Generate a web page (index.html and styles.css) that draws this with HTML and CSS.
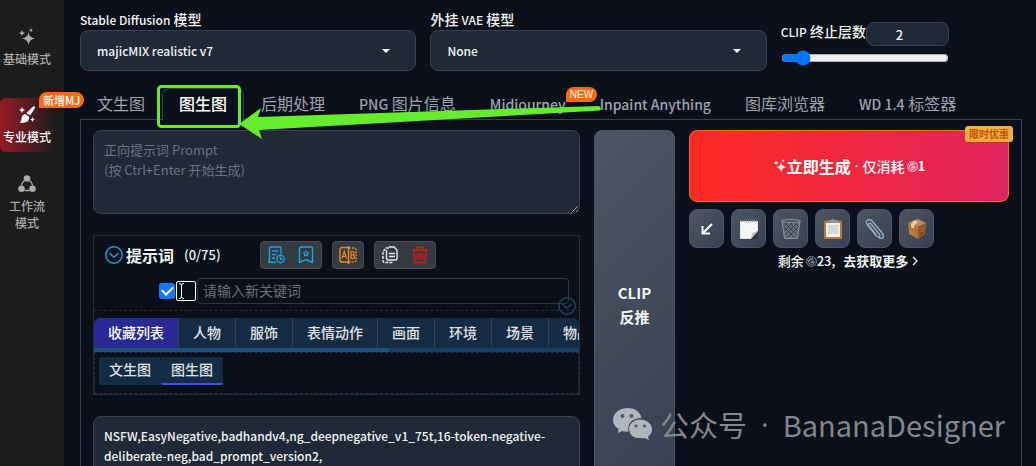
FILE: index.html
```html
<!DOCTYPE html>
<html lang="zh-CN">
<head>
<meta charset="utf-8">
<meta name="viewport" content="width=device-width, initial-scale=1">
<title>Stable Diffusion</title>
<link rel="stylesheet" href="styles.css">
</head>
<body>
<svg class="defs" width="0" height="0" aria-hidden="true">
  <symbol id="sparkle" viewBox="0 0 18 18"><path fill="currentColor" d="M10.500 4 Q11.200 9.800 17 10.500 Q11.200 11.200 10.500 17 Q9.800 11.200 4 10.500 Q9.800 9.800 10.500 4ZM4 2 Q4.400 4.600 7 5 Q4.400 5.400 4 8 Q3.600 5.400 1 5 Q3.600 4.600 4 2ZM13 0 Q13.300 1.900 15 2.200 Q13.300 2.500 13 4.400 Q12.700 2.500 11 2.200 Q12.700 1.900 13 0Z"/></symbol>
  <symbol id="coin" viewBox="0 0 12 12"><g fill="none" stroke="currentColor"><circle cx="6" cy="6" r="5.300"/><path d="M8.300 3.800 A3.200 3.200 0 1 0 9 7 M9.300 5.800 H6 Q4.500 6 5.600 7.400 L8.500 7.300 M3 5.200 L7 3.300"/></g></symbol>
  <symbol id="down" viewBox="0 0 18 18"><g fill="none" stroke="currentColor" stroke-width="1.500"><circle cx="9" cy="9" r="8.200"/><path d="M4.500 7 L9 11.300 L13.500 7"/></g></symbol>
</svg>
<div class="app">
  <nav class="sidebar">
    <a class="mode" href="#basic"><svg class="mode-icon" viewBox="0 0 18 18"><use href="#sparkle"/></svg><span>基础模式</span></a>
    <a class="mode active" href="#pro">
      <svg class="mode-icon" viewBox="0 0 18 18"><path fill="currentColor" d="M16.500 .5 Q17.500 1 16.800 2.500 L12 9.500 L8.500 7 L14.500 1 Q15.500 0 16.500 .5ZM7.500 8 L11 10.700 Q11.500 15 7 16.600 Q4 17.500 1.500 16.200 Q3.600 15.500 3.500 12.500 Q4 8.500 7.500 8ZM4 1 Q4.400 3.600 7 4 Q4.400 4.400 4 7 Q3.600 4.400 1 4 Q3.600 3.600 4 1ZM14.500 11 Q14.800 13.200 17 13.500 Q14.800 13.800 14.500 16 Q14.200 13.800 12 13.500 Q14.200 13.200 14.500 11Z"/></svg>
      <span>专业模式</span><span class="badge mj">新增MJ</span>
    </a>
    <a class="mode" href="#flow">
      <svg class="mode-icon" viewBox="0 0 18 18"><g fill="none" stroke="currentColor" stroke-width="1.500"><path d="M6.500 5.500 Q3.800 7.500 3.300 10.500 M11.500 5.500 Q14.200 7.500 14.700 10.500 M6.500 15.500 H11.500"/></g><g fill="currentColor"><circle cx="9" cy="3.500" r="3.300"/><circle cx="3.500" cy="13.800" r="3.300"/><circle cx="14.500" cy="13.800" r="3.300"/></g></svg>
      <span>工作流<br>模式</span>
    </a>
  </nav>
  <main class="main">
    <header class="settings">
      <div class="field">
        <label for="model"><span class="latin">Stable Diffusion</span> 模型</label>
        <div class="select-wrap"><select id="model"><option>majicMIX realistic v7</option></select></div>
      </div>
      <div class="field">
        <label for="vae">外挂 <span class="latin">VAE</span> 模型</label>
        <div class="select-wrap"><select id="vae"><option>None</option></select></div>
      </div>
      <div class="clip">
        <div class="clip-row"><label for="clip-number"><span class="latin">CLIP</span> 终止层数</label><input id="clip-number" class="clip-number" type="text" value="2"></div>
        <input class="slider" type="range" min="1" max="12" value="2" aria-label="CLIP 终止层数">
      </div>
    </header>
    <div class="tabs" role="tablist">
      <button role="tab">文生图</button>
      <button role="tab" class="current" aria-selected="true">图生图</button>
      <button role="tab">后期处理</button>
      <button role="tab"><span class="latin">PNG</span> 图片信息</button>
      <button role="tab"><span class="latin">Midjourney</span><span class="badge new">NEW</span></button>
      <button role="tab"><span class="latin">Inpaint Anything</span></button>
      <button role="tab">图库浏览器</button>
      <button role="tab"><span class="latin">WD 1.4</span> 标签器</button>
    </div>
    <section class="panel">
      <div class="prompts">
        <textarea class="prompt" aria-label="正向提示词" placeholder="正向提示词 Prompt&#10;(按 Ctrl+Enter 开始生成)"></textarea>
        <div class="keywords">
          <div class="kw-head">
            <svg class="chevron" viewBox="0 0 18 18"><use href="#down"/></svg>
            <h2>提示词</h2><span class="count">(0/75)</span>
            <div class="tools">
              <div class="tool-group blue">
                <button aria-label="历史"><svg viewBox="0 0 18 18"><g fill="none" stroke="currentColor" stroke-width="1.400"><path d="M14 8 V2.500 Q14 1 12.500 1 H4 Q2.500 1 2.500 2.500 V14 Q2.500 16 1 16.300 H9 M5 5 H11.500 M5 8.500 H9.500 M5 12 H8"/><circle cx="13.500" cy="13" r="3.700"/><path d="M13.500 10.800 V13.300 H15.500"/></g></svg></button>
                <button aria-label="收藏"><svg viewBox="0 0 18 18"><path fill="none" stroke="currentColor" stroke-width="1.400" d="M2.500 2.500 Q2.500 1 4 1 H14 Q15.500 1 15.500 2.500 V16.500 L9 13.500 L2.500 16.500Z"/><path fill="currentColor" d="M9 4 L10.200 6 L12.300 6.500 L11 8.200 L11.200 10.500 L9 9.700 L6.800 10.500 L7 8.200 L5.700 6.500 L7.800 6Z"/><path fill="#363a42" d="M8 6.500h2v2H8z"/></svg></button>
              </div>
              <div class="tool-group orange">
                <button aria-label="翻译"><svg viewBox="0 0 18 18"><g fill="none" stroke="currentColor" stroke-width="1.400"><path d="M9 1.500 H3 Q1 1.500 1 3.500 V14 Q1 16 3 16 H9 M9.500 0 V18"/><path stroke-dasharray="2 1" d="M10 2 H15 Q17 2 17 4 V14 Q17 16 15 16 H10"/><path stroke-width="1.200" d="M3 12.500 L5.200 5.500 L7.500 12.500 M3.700 10.500 H6.800 M12 5.500 V12.500 H13.500 Q15.500 12.500 15.500 10.500 Q15.500 9 14 9 H12 H13.500 Q15 9 15 7.200 Q15 5.500 13.500 5.500Z"/></g></svg></button>
              </div>
              <div class="tool-group">
                <button aria-label="复制"><svg viewBox="0 0 18 18"><g fill="none" stroke="#e5e7eb" stroke-width="1.400"><path d="M8 1 H13 L16 4 V12.500 Q16 14 14.500 14 H7 Q5.500 14 5.500 12.500 V4 M8 7.500 H14 M8 10.500 H14"/><path stroke-dasharray="3 1" d="M8 2 H5.500 L2 5.500 V15 Q2 16.500 3.500 16.500 H12"/></g></svg></button>
                <button aria-label="删除"><svg viewBox="0 0 18 18"><path fill="none" stroke="#c9200e" stroke-width="1.500" d="M1 4 H17 M6 4 V1.500 H12 V4 M3.500 4 V15 Q3.500 16.500 5 16.500 H13 Q14.500 16.500 14.500 15 V4 M6.500 7 V14 M9 7 V14 M11.500 7 V14"/></svg></button>
              </div>
            </div>
          </div>
          <div class="kw-entry">
            <input class="check" type="checkbox" checked aria-label="启用">
            <span class="cursor-box"><svg viewBox="0 0 16 16"><path fill="none" stroke="#fff" stroke-width="1" d="M1 .5 Q3.500 .5 3.500 2 Q3.500 .5 6 .5 M3.500 2 V14 M1 15.500 Q3.500 15.500 3.500 14 Q3.500 15.500 6 15.500"/></svg></span>
            <input class="kw-input" type="text" placeholder="请输入新关键词" aria-label="请输入新关键词">
            <svg class="expand" viewBox="0 0 18 18"><use href="#down"/></svg>
          </div>
          <div class="groups">
            <button class="current">收藏列表</button><button>人物</button><button>服饰</button><button>表情动作</button><button>画面</button><button>环境</button><button>场景</button><button>物品</button>
          </div>
          <div class="scrollbar"><div class="scroll-thumb"></div></div>
          <div class="subtabs"><button>文生图</button><button class="current">图生图</button></div>
        </div>
        <textarea class="prompt negative" aria-label="反向提示词">NSFW,EasyNegative,badhandv4,ng_deepnegative_v1_75t,16-token-negative-deliberate-neg,bad_prompt_version2,</textarea>
      </div>
      <button class="interrogate">CLIP<br>反推</button>
      <aside class="actions">
        <button class="generate">
          <svg class="spark" viewBox="0 0 18 18"><use href="#sparkle"/></svg><strong>立即生成</strong><span class="dot">·</span><span class="cost">仅消耗</span><svg class="coin" viewBox="0 0 12 12"><use href="#coin"/></svg><span class="price">1</span>
          <span class="promo">限时优惠</span>
        </button>
        <div class="shortcuts">
          <button aria-label="读取参数"><svg viewBox="0 0 20 20"><path fill="none" stroke="#fff" stroke-width="2" d="M15 5 L6 14 M5.500 7 V14.500 H13"/></svg></button>
          <button aria-label="便签"><svg viewBox="0 0 20 20"><path fill="#e4e5e5" d="M1 2 H19 V12 L12 20 H1Z"/><path fill="#f7f7f5" d="M2 4H18V11L11 19H2Z"/><path fill="#34373c" d="M19 12 L12 20 H19Z"/><path fill="#c3c5c7" d="M12 20 L13 14 L19 12Z"/><path stroke="#777b80" stroke-dasharray="1 1" stroke-width="2" d="M1 1.500H19"/></svg></button>
          <button aria-label="清空"><svg viewBox="0 0 20 20"><path fill="#656d77" d="M1 2H19L16.500 19.500H3.500Z"/><path fill="none" stroke="#303840" stroke-width=".8" d="M2 7L14 19M3 3L16 16M8 3L17 12M13 3L18 8M18 7L6 19M17 3L4 16M12 3L3 12M7 3L2 8"/><path fill="none" stroke="#8a929b" d="M1 2L3.500 19.500H16.500L19 2"/><ellipse cx="10" cy="2" rx="9.500" ry="1.500" fill="#4a535e" stroke="#8a929b"/></svg></button>
          <button aria-label="粘贴"><svg viewBox="0 0 20 20"><rect x="1" y="1.500" width="18" height="18.500" rx="1.500" fill="#b17b3a"/><path fill="#f0f0ee" d="M3 4H17V18H3Z"/><path fill="#d6d7d7" d="M5 6H15V15H5Z"/><path fill="#8a939e" d="M5 1H8Q10-1.500 12 1H15V4H5Z"/></svg></button>
          <button aria-label="附件"><svg viewBox="0 0 20 20"><path fill="none" stroke="#9aa9bd" stroke-width="1.400" d="M6.500 5.500 L14.500 15.500 Q15.500 17.500 14 18 Q12.500 18.300 11 16.500 L2.500 6 Q0 2.500 2.500 1 Q5 -.5 7.500 2.500 L17.500 14.500 Q19.500 17.500 17.500 19 Q15.500 20 13.500 18.500 M6.500 5.500 Q5 3.500 3.800 4.500 Q3 5.500 4.500 7.500 L11 15.500"/></svg></button>
          <button aria-label="模型库"><svg viewBox="0 0 20 20"><path fill="#c58a55" d="M1 4L11 0L19 4L11 8Z"/><path fill="#b8763f" d="M1 4L11 8V20L2 15Z"/><path fill="#93582f" d="M19 4L11 8V20L18 15Z"/><path fill="#ead7b8" d="M5 2.500L8 1.200L9 1.600L6 3Z M4 5.200L7 6.400V9.500L4 8Z M4 5.200L8 2L11 3L7 6.400Z"/><path stroke="#53301b" d="M13 15L16 13.500"/></svg></button>
        </div>
        <div class="balance"><span>剩余</span><svg class="coin dim" viewBox="0 0 12 12"><use href="#coin"/></svg><span>23,</span><a href="#more">去获取更多<svg class="arrow-right" viewBox="0 0 8 12"><path fill="none" stroke="currentColor" stroke-width="1.200" d="M2 2 L6 6 L2 10"/></svg></a></div>
      </aside>
    </section>
  </main>
  <svg class="annotation" viewBox="0 0 1036 466" aria-hidden="true"><rect x="158.500" y="86.500" width="81" height="40" rx="3" fill="none" stroke="#65ec2d" stroke-width="3"/><path fill="#65ec2d" d="M239 124 L261 108 L258 117 L599 106 Q602 108 600 110.500 L259 130 L262 139Z"/></svg>
  <div class="watermark"><svg viewBox="0 0 40 32"><path fill="#b1b5be" d="M14.500 0C22 0 27.500 4 28.500 10C20 10 14 15 15.500 23.500Q12 24 9 23L5 25L5.500 21Q0 17.500 0 12C0 5 6.500 0 14.500 0ZM27 11.500C34 11.500 39 16 39 21.500Q39 25.500 35 28.500L36 32L31.500 30Q17 32 16 21.500C16 16 20.500 11.500 27 11.500Z"/><g fill="#515c6a"><circle cx="9.500" cy="8" r="2"/><circle cx="18.500" cy="8" r="2"/><circle cx="23" cy="18" r="1.600"/><circle cx="31.500" cy="18" r="1.600"/></g></svg><span>公众号</span><span class="dot">·</span><span>BananaDesigner</span></div>
</div>
</body>
</html>
```
FILE: styles.css
```css
* { box-sizing: border-box; }
body { margin: 0; height: 100vh; overflow: hidden; background: #0b0f19; color: #f3f4f6; font: 500 14px/20px "Noto Sans CJK SC", sans-serif; }
button, input, select, textarea { font: inherit; color: inherit; margin: 0; }
button { cursor: pointer; border: 0; background: none; padding: 0; }
a { color: inherit; text-decoration: none; }
.defs { position: absolute; }
.latin { font-size: 12px; }
.app { position: relative; display: flex; height: 100vh; overflow: hidden; }

.sidebar { flex: 0 0 64px; background: #1c1c1c; padding-top: 20px; display: flex; flex-direction: column; gap: 15px; }
.mode { position: relative; display: flex; flex-direction: column; align-items: center; gap: 4px; width: 54px; min-height: 54px; padding-top: 8px; color: #aaa; font-size: 12px; line-height: 17px; text-align: center; }
.mode:first-child { margin-bottom: 9px; }
.mode.active { color: #fff; border-radius: 6px; background: linear-gradient(90deg, #961a24, #1c1c1c); }
.mode-icon { width: 18px; height: 18px; flex: none; }
.badge { position: absolute; background: #fa6a14; color: #fff; border-radius: 8px 8px 8px 0; white-space: nowrap; text-align: center; }
.mj { left: 39px; top: -6px; padding: 0 4px; font-size: 11px; line-height: 16px; z-index: 1; }
.new { left: 92px; top: -2px; padding: 0 4px; font: 500 10px/15px "Liberation Sans", sans-serif; }

.main { flex: 1; min-width: 0; padding: 10px 14px 0 16px; }
.settings { display: grid; grid-template-columns: minmax(0, 2fr) minmax(0, 2fr) minmax(0, 1fr); gap: 14px; padding-right: 73px; min-height: 61px; }
.field label { display: block; height: 20px; line-height: 18px; }
.select-wrap { position: relative; }
.select-wrap::after { content: ""; position: absolute; right: 26px; top: 19px; border: 4px solid transparent; border-top-color: #fff; border-bottom: 0; }
select { appearance: none; display: block; width: 100%; height: 41px; padding: 0 16px; background: #1f2937; border: 1px solid #374151; border-radius: 8px; font-size: 12px; }
.clip { padding-top: 12px; }
.clip-row { display: flex; align-items: flex-start; white-space: nowrap; }
.clip-row label { flex: none; line-height: 18px; }
.clip-number { flex: 1; min-width: 0; height: 24px; padding: 0 16px 0 0; text-align: center; background: #1f2937; border: 1px solid #374151; border-radius: 8px; font-size: 13px; }
.slider { display: block; width: 100%; height: 16px; margin-top: 4px; accent-color: #0075ff; }

.tabs { display: flex; margin-top: 17px; position: relative; margin-bottom: -1px; }
.tabs button { position: relative; flex: none; height: 32px; padding: 0 16px; border: 1px solid transparent; border-bottom: 0; border-radius: 8px 8px 0 0; color: #9ca3af; font-size: 16px; font-weight: 400; line-height: 28px; padding-bottom: 3px; white-space: nowrap; }
.tabs .latin { font-size: 14px; font-weight: 500; }
.tabs .current { color: #fff; font-weight: 500; border-color: #374151; background: #0b0f19; }
.panel { display: grid; grid-template-columns: minmax(0, 487fr) minmax(0, 81fr) minmax(0, 320fr); gap: 14px; padding: 10px 12px; border: 1px solid #374151; border-bottom: 0; }
.prompts { display: flex; flex-direction: column; gap: 21px; }
.prompt { display: block; width: 100%; height: 84px; padding: 9px 10px; background: #1f2937; border: 1px solid #374151; border-radius: 8px; font-size: 13px; line-height: 20px; overflow: hidden; }
.prompt::placeholder { color: #6b7280; font-weight: 400; opacity: 1; }
.negative { font-size: 12px; }
.keywords { border: 1px solid #272b34; min-height: 160px; }
.kw-head { display: flex; align-items: center; padding: 3px 11px 0; height: 34px; }
.chevron { width: 18px; height: 18px; color: #12a1e2; }
.kw-head h2 { margin: 0 10px 0 3px; font-size: 16px; line-height: 24px; font-weight: 700; }
.count { font-size: 13px; }
.tools { display: flex; gap: 10px; margin-left: 39px; }
.tool-group { display: flex; gap: 12px; height: 28px; padding: 0 6px; border: 1px solid #4a4d54; border-radius: 4px; background: #363a42; }
.tool-group button { display: grid; place-items: center; width: 18px; }
.tool-group svg { width: 18px; height: 18px; }
.blue { color: #15a5e8; }
.orange { color: #f08c14; }
.kw-entry { position: relative; display: flex; align-items: center; height: 41px; padding: 2px 10px 0 65px; border-bottom: 1px dashed #272b34; }
.check { appearance: none; display: grid; place-items: center; width: 16px; height: 16px; border-radius: 3px; background: #1677ff; }
.check::after { content: ""; width: 9px; height: 5px; border: solid #fff; border-width: 0 0 2px 2px; rotate: -45deg; margin-bottom: 3px; }
.cursor-box { width: 20px; height: 20px; margin: 0 1px; padding: 1px; border: 1px solid #fff; border-radius: 2px; }
.cursor-box svg { display: block; width: 16px; height: 16px; }
.kw-input { flex: 1; min-width: 0; height: 26px; padding: 0 5px 2px; font-size: 14px; font-weight: 400; background: transparent; border: 1px solid #30343d; border-radius: 4px; }
.kw-input::placeholder { color: #6e6e70; opacity: 1; }
.expand { position: absolute; right: 3px; bottom: -5px; width: 18px; height: 18px; color: #1d4467; }
.groups { display: flex; margin-top: 7px; overflow: hidden; border-radius: 6px 6px 0 0; }
.groups button { flex: none; height: 30px; padding: 0 14px 2px; background: #142c43; border-right: 1px solid #3b4046; line-height: 28px; color: #e0e3e7; }
.groups .current { background: #292a96; color: #fff; }
.scrollbar { height: 4px; background: #173e61; }
.scroll-thumb { width: 61%; height: 4px; background: #1d527d; border-radius: 0 4px 4px 0; }
.subtabs { display: flex; height: 42px; padding: 4px; border: 1px dashed #183349; }
.subtabs button { height: 28px; padding: 0 10px 2px; background: #142c43; border-bottom: 2px solid #142c43; border-radius: 2px; line-height: 24px; color: #e0e3e7; }
.subtabs .current { border-bottom-color: #484df0; }

.interrogate { align-self: start; min-height: 350px; border: 1px solid #4b5563; border-radius: 8px; background: linear-gradient(135deg, #4b5563, #374151); font-size: 15px; font-weight: 700; line-height: 24px; }
.generate { position: relative; display: flex; align-items: center; justify-content: center; width: 100%; height: 72px; border: 1px solid #f36c10; border-radius: 8px; background: linear-gradient(90deg, #ff2a22, #e0245e); color: #fff; }
.spark { width: 14px; height: 14px; }
.generate strong { font-size: 16px; }
.dot { font-family: "Open Sans", sans-serif; }
.generate .dot { margin: 0 4px; }
.cost { margin-right: 2px; }
.coin { width: 11px; height: 11px; }
.price { font-size: 13px; font-weight: 700; }
.promo { position: absolute; right: -5px; top: -5px; padding: 0 4px; background: #f4ae3d; color: #c4510c; border-radius: 3px; font-size: 10px; font-weight: 700; line-height: 16px; }
.shortcuts { display: flex; gap: 7px; margin-top: 7px; }
.shortcuts button { display: grid; place-items: center; width: 35px; height: 39px; border: 1px solid #4b5563; border-radius: 8px; background: linear-gradient(135deg, #4b5563, #374151); }
.shortcuts svg { width: 20px; height: 20px; }
.balance { display: flex; align-items: center; justify-content: center; margin-top: 3px; font-size: 13px; }
.balance .coin { margin-left: 2px; }
.balance a { display: flex; align-items: center; margin-left: 8px; font-weight: 700; }
.dim { color: #9ca3af; }
.arrow-right { width: 10px; height: 12px; margin-left: 2px; }
.annotation { position: absolute; left: 0; top: 0; width: 1036px; height: 466px; pointer-events: none; }
.watermark { position: absolute; right: 31px; bottom: 22px; display: flex; align-items: center; color: #858689; font-size: 29px; font-weight: 400; line-height: 40px; white-space: nowrap; pointer-events: none; }
.watermark svg { width: 40px; height: 32px; margin-right: 7px; }
.watermark .dot { margin: 0 14px; }
```
